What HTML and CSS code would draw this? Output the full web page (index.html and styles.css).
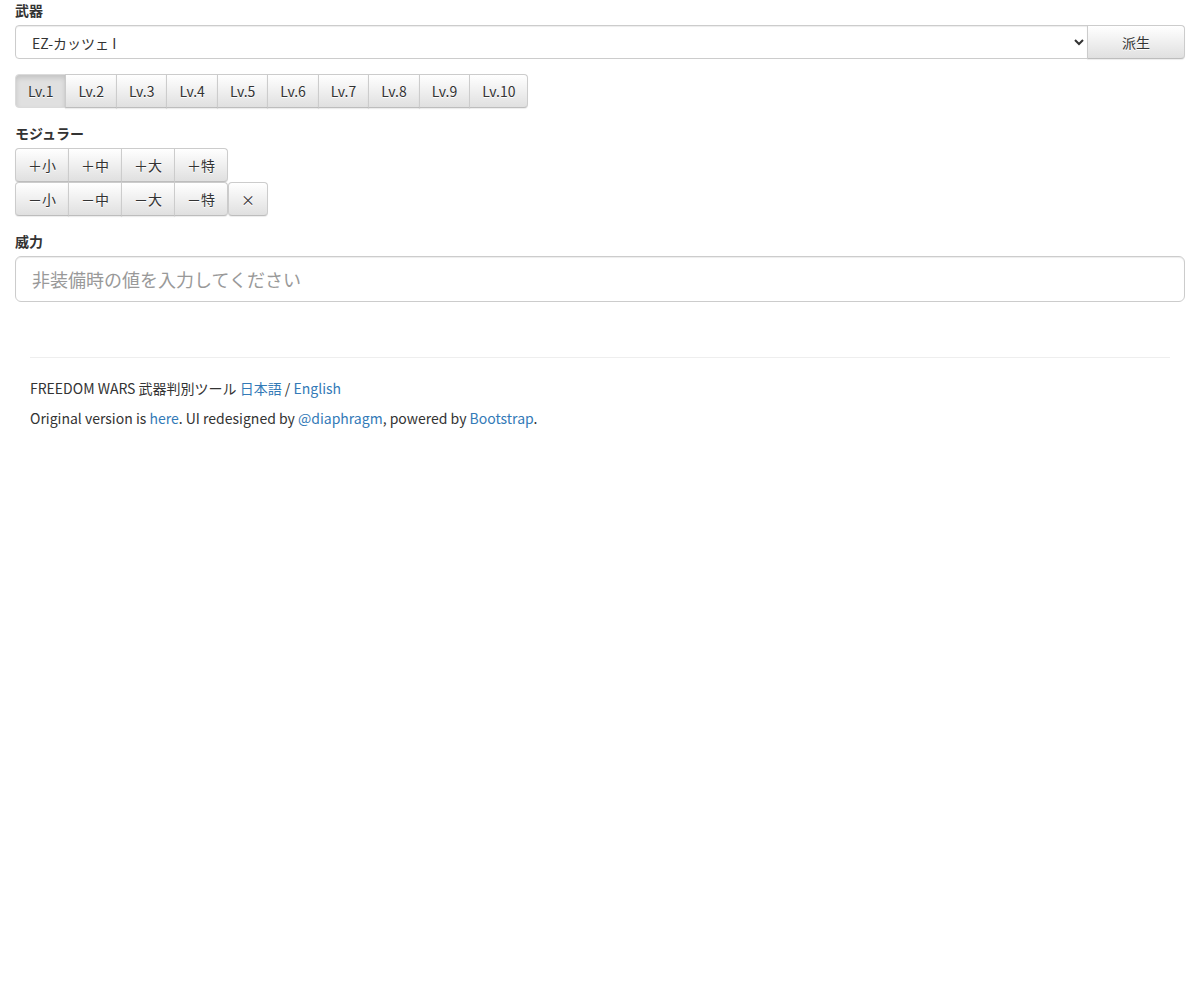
FILE: index.html
```html
<!DOCTYPE html>
<html lang="ja">
<head>
    <meta charset="UTF-8">
    <meta name="viewport" content="width=device-width, initial-scale=1.0">
    <title>FREEDOM WARS 武器判別ツール</title>
    <link rel="stylesheet" href="styles.css">
</head>
<body>
    <div class="container-fluid">
        <form class="main-form">
            <div class="form-group">
                <label for="weapon">武器</label>
                <div class="input-group">
                    <select id="weapon" class="form-control">
                        <option>EZ-カッツェ I</option>
                    </select>
                    <span class="input-group-btn">
                        <button type="button" class="btn btn-derive">派生</button>
                    </span>
                </div>
            </div>
            <div class="form-group">
                <div class="btn-group">
                    <button type="button" class="btn active">Lv.1</button>
                    <button type="button" class="btn">Lv.2</button>
                    <button type="button" class="btn">Lv.3</button>
                    <button type="button" class="btn">Lv.4</button>
                    <button type="button" class="btn">Lv.5</button>
                    <button type="button" class="btn">Lv.6</button>
                    <button type="button" class="btn">Lv.7</button>
                    <button type="button" class="btn">Lv.8</button>
                    <button type="button" class="btn">Lv.9</button>
                    <button type="button" class="btn">Lv.10</button>
                </div>
            </div>
            <div class="form-group">
                <label>モジュラー</label>
                <div class="btn-row">
                    <div class="btn-group">
                        <button type="button" class="btn">＋小</button>
                        <button type="button" class="btn">＋中</button>
                        <button type="button" class="btn">＋大</button>
                        <button type="button" class="btn">＋特</button>
                    </div>
                </div>
                <div class="btn-row">
                    <div class="btn-group">
                        <button type="button" class="btn">－小</button>
                        <button type="button" class="btn">－中</button>
                        <button type="button" class="btn">－大</button>
                        <button type="button" class="btn">－特</button>
                    </div>
                    <div class="btn-group">
                        <button type="button" class="btn">×</button>
                    </div>
                </div>
            </div>
            <div class="form-group">
                <label for="power">威力</label>
                <input id="power" type="text" class="form-control input-lg" placeholder="非装備時の値を入力してください">
            </div>
        </form>
    </div>

    <footer class="container">
        <hr>
        <p>FREEDOM WARS 武器判別ツール <a href="#">日本語</a> / <a href="#">English</a></p>
        <p>Original version is <a href="#">here</a>. UI redesigned by <a href="#">@diaphragm</a>, powered by <a href="#">Bootstrap</a>.</p>
    </footer>
</body>
</html>
```

FILE: styles.css
```css
* {
    box-sizing: border-box;
}
body {
    margin: 0;
    font-family: "Noto Sans CJK JP", "Noto Sans", sans-serif;
    font-size: 14px;
    line-height: 20px;
    color: #333;
    background-color: #fff;
}
a {
    color: #337ab7;
    text-decoration: none;
}
.container-fluid {
    padding: 0 15px;
}
.container {
    width: 1170px;
    margin: 0 auto;
    padding: 20px 15px 0;
}
.main-form {
    margin: 0;
}
.form-group {
    margin-bottom: 15px;
}
label {
    display: block;
    margin-bottom: 5px;
    font-weight: bold;
}
.form-control {
    display: block;
    width: 100%;
    height: 34px;
    padding: 6px 12px;
    font-family: inherit;
    font-size: 14px;
    line-height: 20px;
    color: #555;
    background-color: #fff;
    border: 1px solid #ccc;
    border-radius: 4px;
    box-shadow: inset 0 1px 1px rgba(0, 0, 0, 0.075);
}
select.form-control {
    padding-left: 12px;
    color: #333;
}
.input-lg {
    height: 46px;
    padding: 10px 16px;
    font-size: 18px;
    line-height: 24px;
    border-radius: 6px;
}
.form-control::placeholder {
    color: #999;
}
.input-group {
    display: flex;
}
.input-group .form-control {
    flex: 1;
    border-top-right-radius: 0;
    border-bottom-right-radius: 0;
}
.input-group-btn .btn {
    margin-left: -1px;
    border-top-left-radius: 0;
    border-bottom-left-radius: 0;
}
.btn-derive {
    width: 98px;
}
.btn {
    display: inline-block;
    height: 34px;
    padding: 6px 12px;
    font-family: inherit;
    font-size: 14px;
    line-height: 20px;
    color: #333;
    text-shadow: 0 1px 0 #fff;
    background-color: #fff;
    background-image: linear-gradient(to bottom, #fff 0, #e0e0e0 100%);
    border: 1px solid #ccc;
    border-bottom-color: #bdbdbd;
    border-radius: 4px;
    box-shadow: inset 0 1px 0 rgba(255, 255, 255, 0.15), 0 1px 1px rgba(0, 0, 0, 0.075);
    cursor: pointer;
}
.btn.active {
    background-color: #e0e0e0;
    background-image: none;
    border-color: #dbdbdb;
    box-shadow: inset 0 3px 5px rgba(0, 0, 0, 0.125);
}
.btn-group {
    display: inline-flex;
}
.btn-group .btn + .btn {
    margin-left: -1px;
}
.btn-group .btn:not(:first-child) {
    border-top-left-radius: 0;
    border-bottom-left-radius: 0;
}
.btn-group .btn:not(:last-child) {
    border-top-right-radius: 0;
    border-bottom-right-radius: 0;
}
.btn-row {
    display: flex;
}
hr {
    margin: 20px 0;
    border: 0;
    border-top: 1px solid #eee;
}
footer p {
    margin: 0 0 10px;
}
```
